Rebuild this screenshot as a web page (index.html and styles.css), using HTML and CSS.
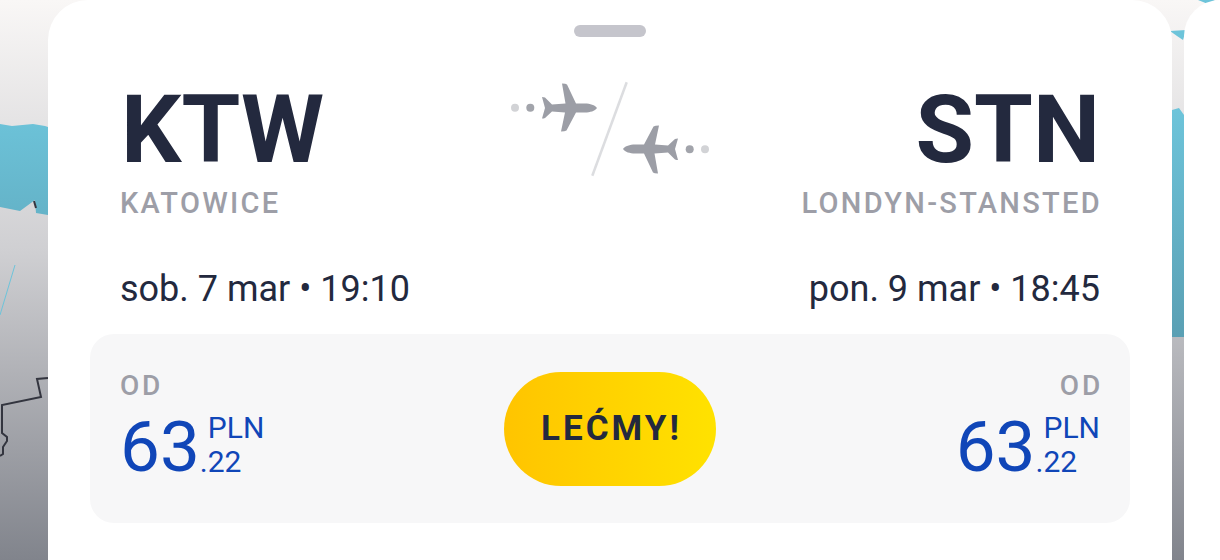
FILE: index.html
```html
<!doctype html>
<html lang="pl">
	<head>
		<meta charset="utf-8" />
		<title>Loty</title>
		<link rel="stylesheet" href="styles.css">
	</head>

	<body>
		<!-- mapa pod kartami -->
		<svg class="map" width="1220" height="560" viewBox="0 0 1220 560">
			<defs>
				<linearGradient id="land" x1="0" y1="0" x2="0" y2="1">
					<stop offset="0" stop-color="#f9f7f6" />
					<stop offset="0.45" stop-color="#cfcfd2" />
					<stop offset="1" stop-color="#81848c" />
				</linearGradient>
				<linearGradient id="sea" gradientUnits="userSpaceOnUse" x1="0" y1="110" x2="0" y2="340">
					<stop offset="0" stop-color="#6dc4da" />
					<stop offset="1" stop-color="#5a9fb3" />
				</linearGradient>
			</defs>
			<rect width="1220" height="560" fill="url(#land)" />
			<polygon fill="url(#sea)" points="0,124 12,126 33,124 45,126 48,127 48,215 36,213 35,200 20,211 0,207" />
			<polygon fill="url(#sea)" points="1172,110 1179,108 1184,115 1184,337 1172,337" />
			<polygon fill="#6dc4da" points="1170,31 1186,30 1183,40 1177,36" />
			<polygon fill="#6dc4da" points="1198,0 1215,0 1208,4" />
			<path class="coast" d="M15 265 L0 315" />
			<path class="border" d="M48 378 L37 379 L41 397 L2 405 L2 433 L7 437 L7 441 L3 447 L3 454 L0 456" />
			<path class="border" d="M34 201 L36 208" />
		</svg>

		<main class="cards">
			<section class="card">
				<div class="handle"></div>

				<div class="route">
					<div class="airport">
						<div class="code">KTW</div>
						<div class="city">KATOWICE</div>
						<div class="date">sob. 7 mar • 19:10</div>
					</div>

					<svg class="route-icon" width="240" height="120" viewBox="0 0 240 120">
						<path class="slash" d="M136.7 12.3 L102.3 105.7" />
						<g id="leg">
							<circle cx="25" cy="37.7" r="4" fill="#d2d3d6" />
							<circle cx="40.3" cy="37.7" r="4" fill="#a2a4ab" />
							<path fill="#9c9ea6" d="M107 38 C105 35 100 33.5 95 33.5 L86 33.5 L77 14.5 Q76 13.5 72 13.5 L75.5 33.5 L62 34.5 L55 27.5 Q53.5 27 52 27 L55 38 L52 48.5 Q54 48.5 55 48 L62 41.5 L75 42.5 L71 61.5 Q75 61.5 76.5 60.5 L86 42.5 L95 42.5 C100 42.5 105 41 107 38 Z" />
						</g>
						<use href="#leg" transform="rotate(180 120 58.5)" />
					</svg>

					<div class="airport right">
						<div class="code">STN</div>
						<div class="city">LONDYN-STANSTED</div>
						<div class="date">pon. 9 mar • 18:45</div>
					</div>
				</div>

				<div class="offer">
					<div class="fare">
						<div class="from">OD</div>
						<div class="price">
							<span class="whole">63</span>
							<span class="rest"><span class="currency">PLN</span><span>.22</span></span>
						</div>
					</div>

					<button class="go-button">LEĆMY!</button>

					<div class="fare right">
						<div class="from">OD</div>
						<div class="price">
							<span class="whole">63</span>
							<span class="rest"><span class="currency">PLN</span><span>.22</span></span>
						</div>
					</div>
				</div>
			</section>

			<section class="card next"></section>
		</main>
	</body>
</html>
```

FILE: styles.css
```css
/* ogólne */

body {
	margin: 0;
	width: 1220px;
	height: 560px;
	overflow: hidden;
	position: relative;
	font-family: Roboto, "Liberation Sans", sans-serif;
	color: #23293e;
}

.map {
	position: absolute;
	top: 0;
	left: 0;
}

.cards {
	position: relative;
	box-sizing: border-box;
	display: flex;
	gap: 12px;
	height: 100%;
	padding-left: 48px;
}

/* karta lotu */

.card {
	flex: none;
	box-sizing: border-box;
	width: 1124px;
	height: 100%;
	padding: 25px 42px 0;
	background: white;
	border-radius: 40px 40px 0 0;
}

.card.next {
	flex: 1;
	width: auto;
	padding: 0;
	border-radius: 36px 0 0 0;
}

.handle {
	width: 72px;
	height: 12px;
	margin: 0 auto;
	background: #c5c5cc;
	border-radius: 6px;
}

/* lotniska */

.route {
	display: grid;
	grid-template-columns: 1fr auto 1fr;
	padding: 0 30px;
	margin-top: 33px;
}

.code {
	font-size: 95px;
	font-weight: 700;
	line-height: 115px;
	margin-top: 2px;
	margin-left: 1px;
}

.city {
	font-size: 29px;
	font-weight: 500;
	line-height: 34px;
	letter-spacing: 2.3px;
	color: #9d9ea7;
	margin-top: -1px;
	white-space: nowrap;
}

.date {
	font-size: 36px;
	line-height: 40px;
	margin-top: 49px;
	white-space: nowrap;
}

.right {
	text-align: right;
}

.right .code {
	margin-left: 0;
}

.right .city {
	margin-right: -2px;
}

.slash {
	stroke: #dcdde0;
	stroke-width: 2.5;
	fill: none;
}

.coast {
	stroke: #6dc4da;
	stroke-width: 1;
	fill: none;
}

.border {
	stroke: #33353f;
	stroke-width: 2;
	fill: none;
}

/* ceny */

.offer {
	display: grid;
	grid-template-columns: 1fr auto 1fr;
	align-items: center;
	height: 189px;
	padding: 0 30px;
	margin-top: 25px;
	background: #f7f7f8;
	border-radius: 24px;
}

.fare {
	padding-bottom: 2px;
}

.from {
	font-size: 28px;
	font-weight: 500;
	line-height: 30px;
	letter-spacing: 2.8px;
	color: #9d9ea7;
	margin-bottom: 8px;
}

.right .from {
	margin-right: -3px;
}

.price {
	display: flex;
	align-items: flex-end;
	color: #1046b8;
}

.fare.right .price {
	justify-content: flex-end;
}

.whole {
	font-size: 71px;
	line-height: 76px;
	margin-bottom: -1px;
}

.rest {
	display: flex;
	flex-direction: column;
	font-size: 30px;
	line-height: 34px;
	margin-bottom: 5px;
	text-align: left;
}

.currency {
	margin-left: 8px;
}

.go-button {
	width: 212px;
	height: 114px;
	padding: 0 0 0 3px;
	border: 0;
	border-radius: 57px;
	background: linear-gradient(to right, #ffc400, #ffe200);
	font-family: inherit;
	font-size: 35px;
	font-weight: 700;
	letter-spacing: 3px;
	color: #23293e;
}
```
